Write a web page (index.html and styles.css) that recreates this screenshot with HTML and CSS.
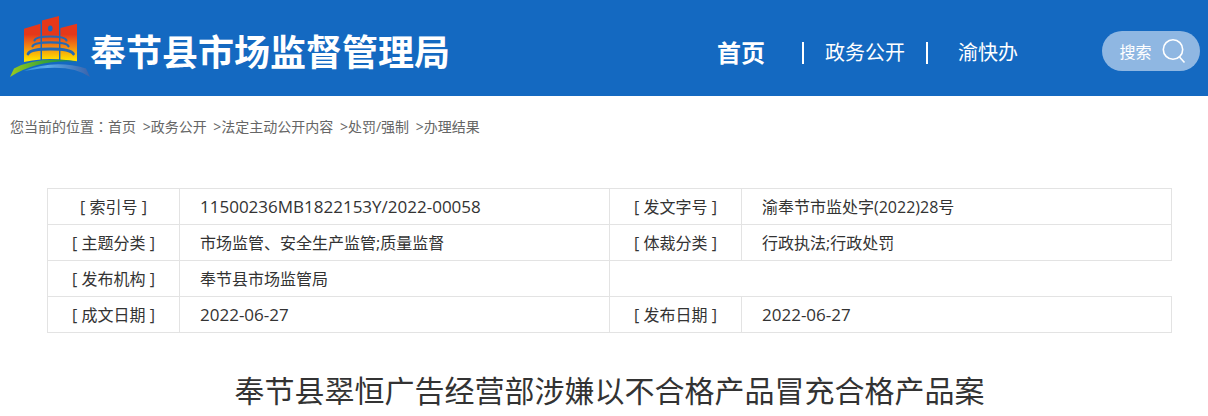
FILE: index.html
```html
<!DOCTYPE html>
<html lang="zh-CN">
<head>
<meta charset="utf-8">
<meta name="viewport" content="width=device-width, initial-scale=1">
<title>奉节县市场监督管理局</title>
<link rel="stylesheet" href="styles.css">
</head>
<body>
<header class="site-header">
  <div class="brand">
    <svg class="logo" viewBox="0 0 82 64" aria-hidden="true">
      <defs>
        <linearGradient id="tower" gradientUnits="userSpaceOnUse" x1="0" y1="0" x2="0" y2="46">
          <stop offset="0.4" stop-color="#e5381a"/>
          <stop offset="0.68" stop-color="#f28a12"/>
          <stop offset="0.95" stop-color="#fee000"/>
        </linearGradient>
        <linearGradient id="hill" x1="0" y1="0" x2="1" y2="0">
          <stop offset="0" stop-color="#9bcb1c"/>
          <stop offset="0.5" stop-color="#3fa535"/>
          <stop offset="1" stop-color="#0d8a4a"/>
        </linearGradient>
        <linearGradient id="river" x1="0" y1="0" x2="1" y2="0">
          <stop offset="0" stop-color="#2f8fe0"/>
          <stop offset="0.35" stop-color="#5aaae8"/>
          <stop offset="1" stop-color="#3a63ab"/>
        </linearGradient>
      </defs>
      <path fill="url(#tower)" d="M16 12.700 32.500 7.700V43.500Q24 44 16 46ZM34 4.400 51 0V43.300Q42 42.500 34 43.300ZM52.400 12 69 7.700V45.300Q61 43.800 52.400 43.400Z"/>
      <ellipse cx="42.300" cy="12.600" rx="2.300" ry="3" fill="#1469c1"/>
      <g fill="none" stroke="#2469b4" stroke-width="2.200" stroke-linecap="round">
        <path d="M26.500 24.500Q27.500 20.500 42.500 20.500T58.500 24.500"/>
        <path d="M24.500 30.300Q26 26.300 42.500 26.300T60.500 30.300"/>
        <path d="M20 38Q22 33 42.500 33T65.500 38" stroke-width="2.800"/>
      </g>
      <path fill="url(#hill)" d="M2 61 6 52.500Q29 40 69.500 45.500Q29 43 2 61Z"/>
      <path fill="url(#river)" d="M16 55Q46 43 78 52.500L82 61Q61 46 16 55Z"/>
    </svg>
    <h1 class="site-name">奉节县市场监督管理局</h1>
  </div>
  <nav class="main-nav" aria-label="主导航">
    <a class="nav-link nav-current" href="#">首页</a>
    <a class="nav-link" href="#">政务公开</a>
    <a class="nav-link nav-last" href="#">渝快办</a>
  </nav>
  <button class="search" type="button">搜索
    <svg class="search-icon" viewBox="0 0 24 26" aria-hidden="true">
      <circle cx="11" cy="11.500" r="9.700"/>
      <path d="M17.500 19 22.500 24.500"/>
    </svg>
  </button>
</header>
<nav class="breadcrumb" aria-label="当前位置">您当前的位置<span class="colon" lang="zh-TW">：</span><a href="#">首页</a> &gt;<a href="#">政务公开</a> &gt;<a href="#">法定主动公开内容</a> &gt;<a href="#">处罚/强制</a> &gt;<a href="#">办理结果</a></nav>
<main class="content">
  <table class="info">
    <colgroup><col class="col-label"><col class="col-value"><col class="col-label"><col class="col-value"></colgroup>
    <tr><th scope="row">[ 索引号 ]</th><td class="number">11500236MB1822153Y/2022-00058</td><th scope="row">[ 发文字号 ]</th><td>渝奉节市监处字(2022)28号</td></tr>
    <tr><th scope="row">[ 主题分类 ]</th><td>市场监管、安全生产监管;质量监督</td><th scope="row">[ 体裁分类 ]</th><td>行政执法;行政处罚</td></tr>
    <tr><th scope="row">[ 发布机构 ]</th><td>奉节县市场监管局</td></tr>
    <tr><th scope="row">[ 成文日期 ]</th><td class="number">2022-06-27</td><th scope="row">[ 发布日期 ]</th><td class="number">2022-06-27</td></tr>
  </table>
  <h2 class="article-title">奉节县翠恒广告经营部涉嫌以不合格产品冒充合格产品案</h2>
</main>
</body>
</html>
```
FILE: styles.css
```css
* {
  box-sizing: border-box;
}

body {
  margin: 0;
  background: #fff;
  color: #333;
  font-family: "Open Sans", "Noto Sans CJK SC", sans-serif;
  font-size: 16px;
}

a {
  color: inherit;
  text-decoration: none;
}

.site-header {
  display: flex;
  align-items: center;
  min-height: 96px;
  padding: 0 8px;
  background: #1469c1;
  color: #fff;
}

.brand {
  display: flex;
  align-items: center;
  flex: 1;
}

.logo {
  width: 82px;
  height: 64px;
  flex: none;
}

.site-name {
  margin: 10px 0 0;
  font-size: 36px;
  line-height: 48px;
  white-space: nowrap;
}

.main-nav {
  display: flex;
  align-items: center;
  margin: 10px 84px 0 0;
  white-space: nowrap;
}

.nav-link {
  display: flex;
  align-items: center;
  font-size: 20px;
  line-height: 32px;
}

.nav-link + .nav-link::before {
  content: "";
  width: 2px;
  height: 22px;
  margin-right: 21px;
  background: #fff;
}

.nav-current {
  margin-right: 37px;
  font-size: 24px;
  font-weight: 700;
}

.nav-last {
  margin-left: 21px;
}

.nav-link.nav-last::before {
  margin-right: 30px;
}

.search {
  display: flex;
  align-items: center;
  justify-content: center;
  gap: 10px;
  width: 98px;
  height: 40px;
  margin-top: 6px;
  padding: 0 0 0 3px;
  border: 0;
  border-radius: 20px;
  background: #8fb7e2;
  color: #fff;
  font: inherit;
}

.search-icon {
  width: 24px;
  height: 26px;
  fill: none;
  stroke: #fff;
  stroke-width: 1.600;
}

.breadcrumb {
  padding: 20px 10px 0;
  color: #666;
  font-size: 14px;
  line-height: 22px;
}

.breadcrumb a {
  margin-right: 3px;
}

.colon {
  font-family: "Open Sans", "Noto Sans CJK TC", sans-serif;
}

.content {
  padding: 50px 36px 0 47px;
}

.info {
  width: 100%;
  table-layout: fixed;
  border-collapse: collapse;
  line-height: 24px;
}

.col-label {
  width: 132px;
}

.info th,
.info td {
  height: 36px;
  padding: 0;
  border: 1px solid #e3e3e3;
  font-weight: 400;
}

.info td {
  padding-left: 20px;
}

.info .number {
  font-size: 17px;
}

.article-title {
  margin: 36px 0 0;
  font-size: 30px;
  font-weight: 400;
  line-height: 44px;
  text-align: center;
}
```
